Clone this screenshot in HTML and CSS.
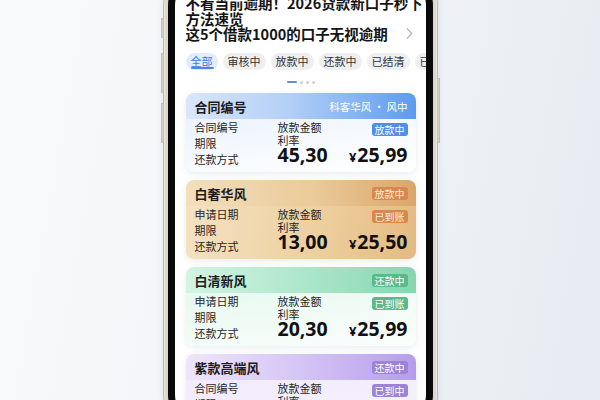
FILE: index.html
```html
<!DOCTYPE html>
<html lang="zh-CN">
<head>
<meta charset="utf-8">
<title>贷款口子速览</title>
<link rel="stylesheet" href="styles.css">
</head>
<body>
<div class="stage">
  <div class="phone">
    <span class="btn btn-l1"></span>
    <span class="btn btn-l2"></span>
    <span class="btn btn-l3"></span>
    <span class="btn btn-r1"></span>
    <div class="bezel">
      <div class="screen">
        <div class="title">
          <div class="tline">不看当前逾期！2026贷款新口子秒下</div>
          <div class="tline">方法速览</div>
          <div class="tline tlast"><span>这5个借款1000的口子无视逾期</span><svg class="chev" width="7" height="11" viewBox="0 0 7 11"><path d="M1.2 0.8 L5.8 5.5 L1.2 10.2" fill="none" stroke="#b8b8b8" stroke-width="1.3" stroke-linecap="round" stroke-linejoin="round"/></svg></div>
        </div>
        <div class="tabs">
          <span class="tab active">全部</span>
          <span class="tab">审核中</span>
          <span class="tab">放款中</span>
          <span class="tab">还款中</span>
          <span class="tab">已结清</span>
          <span class="tab">已逾期</span>
        </div>
        <div class="dots"><span class="dash"></span><span class="dot"></span><span class="dot"></span><span class="dot"></span></div>
        <div class="cards">
          <div class="card c-blue">
            <div class="card-h"><span class="card-t">合同编号</span><span class="card-sub">科客华风 · 风中</span></div>
            <div class="card-b">
              <div class="col-l"><div>合同编号</div><div>期限</div><div>还款方式</div></div>
              <div class="col-m"><div>放款金额</div><div>利率</div><div class="num">45,30</div></div>
              <div class="col-r"><span class="badge">放款中</span><div class="price"><span class="yen">¥</span>25,99</div></div>
            </div>
          </div>
          <div class="card c-gold">
            <div class="card-h"><span class="card-t">白奢华风</span><span class="badge">放款中</span></div>
            <div class="card-b">
              <div class="col-l"><div>申请日期</div><div>期限</div><div>还款方式</div></div>
              <div class="col-m"><div>放款金额</div><div>利率</div><div class="num">13,00</div></div>
              <div class="col-r"><span class="badge">已到账</span><div class="price"><span class="yen">¥</span>25,50</div></div>
            </div>
          </div>
          <div class="card c-green">
            <div class="card-h"><span class="card-t">白清新风</span><span class="badge">还款中</span></div>
            <div class="card-b">
              <div class="col-l"><div>申请日期</div><div>期限</div><div>还款方式</div></div>
              <div class="col-m"><div>放款金额</div><div>利率</div><div class="num">20,30</div></div>
              <div class="col-r"><span class="badge">已到账</span><div class="price"><span class="yen">¥</span>25,99</div></div>
            </div>
          </div>
          <div class="card c-purple">
            <div class="card-h"><span class="card-t">紫款高端风</span><span class="badge">还款中</span></div>
            <div class="card-b">
              <div class="col-l"><div>合同编号</div><div>期限</div><div>还款方式</div></div>
              <div class="col-m"><div>放款金额</div><div>利率</div><div class="num">18,60</div></div>
              <div class="col-r"><span class="badge">已到中</span><div class="price"><span class="yen">¥</span>25,99</div></div>
            </div>
          </div>
        </div>
      </div>
    </div>
  </div>
</div>
</body>
</html>
```
FILE: styles.css
```css
html, body {
  margin: 0;
  padding: 0;
}
body {
  width: 600px;
  height: 400px;
  overflow: hidden;
  background: linear-gradient(100deg, #f9fafb 0%, #f2f4f7 45%, #e7ebf1 100%);
  font-family: "Noto Sans CJK SC", "Noto Sans", sans-serif;
}
.stage {
  display: flex;
  justify-content: center;
  height: 400px;
}
.phone {
  position: relative;
  flex: none;
  width: 275px;
  height: 480px;
  margin-top: -40px;
  padding: 5px;
  box-sizing: border-box;
  border-radius: 46px;
  background: #dcd8d0;
  box-shadow: inset 1px 0 0 #bdb8ae, inset -1px 0 0 #bdb8ae, inset 2px 0 0 #ece9e3, inset -2px 0 0 #ece9e3, 0 0 6px rgba(120,130,150,0.15);
}
.btn {
  position: absolute;
  width: 3px;
  background: #d3cec5;
  border-radius: 1px;
  box-shadow: inset 0 0 0 0.5px #b7b2a8;
}
.btn-l1 { left: -2px; top: 58px; height: 20px; }
.btn-l2 { left: -2px; top: 93px; height: 40px; }
.btn-l3 { left: -2px; top: 143px; height: 40px; }
.btn-r1 { right: -2px; top: 118px; height: 65px; }
.bezel {
  height: 100%;
  padding: 7px;
  box-sizing: border-box;
  background: #0a0a0a;
  border-radius: 41px;
}
.screen {
  height: 100%;
  box-sizing: border-box;
  padding: 23px 10px 0 11px;
  background: #ffffff;
  border-radius: 34px;
  overflow: hidden;
}
.title {
  font-size: 14.5px;
  line-height: 15.5px;
  font-weight: 700;
  color: #141414;
  white-space: nowrap;
}
.tlast {
  display: flex;
  align-items: center;
}
.chev {
  margin-left: auto;
  margin-right: 3px;
}
.tabs {
  display: flex;
  gap: 5px;
  margin-top: 11px;
  white-space: nowrap;
}
.tab {
  position: relative;
  flex: none;
  height: 17px;
  line-height: 17px;
  padding: 0 5px;
  border-radius: 9px;
  background: #eeeff1;
  font-size: 11px;
  color: #333333;
}
.tab.active {
  background: #e2ecfb;
  color: #3b7de2;
}
.tab.active::after {
  content: "";
  position: absolute;
  left: 5px;
  right: 4px;
  bottom: 1px;
  height: 1.5px;
  border-radius: 1px;
  background: #4a86e4;
}
.dots {
  display: flex;
  justify-content: center;
  align-items: center;
  gap: 3px;
  height: 3px;
  margin-top: 11px;
}
.dash {
  width: 10px;
  height: 2.5px;
  border-radius: 2px;
  background: #5b8fe2;
}
.dot {
  width: 3px;
  height: 3px;
  border-radius: 50%;
  background: #cdd1d8;
}
.cards {
  display: flex;
  flex-direction: column;
  gap: 8px;
  margin-top: 9.5px;
}
.card {
  flex: none;
  height: 79px;
  border-radius: 8px;
  overflow: hidden;
  box-shadow: 0 2px 6px rgba(40, 60, 90, 0.10);
}
.card-h {
  height: 26px;
  display: flex;
  align-items: center;
  justify-content: space-between;
  padding: 0 8px 0 9px;
}
.card-t {
  font-size: 13px;
  font-weight: 700;
  color: #1c1c1c;
}
.card-sub {
  font-size: 10.5px;
  color: #ffffff;
}
.card-b {
  display: flex;
  height: 53px;
  padding: 0 8px 0 9px;
  color: #262626;
}
.col-l {
  width: 83px;
  font-size: 11px;
  line-height: 16px;
}
.col-m {
  flex: 1;
  font-size: 11px;
  line-height: 13px;
  padding-top: 1.5px;
}
.num, .price {
  font-family: "Noto Sans", "Liberation Sans", sans-serif;
  font-size: 19.5px;
  font-weight: 700;
  line-height: 15px;
  color: #111111;
}
.num {
  margin-top: 0;
}
.col-r {
  display: flex;
  flex-direction: column;
  align-items: flex-end;
}
.col-r .badge {
  margin-top: 3.5px;
}
.price {
  margin-top: 11px;
}
.yen {
  font-size: 13px;
  margin-right: 1px;
}
.badge {
  height: 13px;
  line-height: 13px;
  padding: 0 3px;
  border-radius: 3px;
  font-size: 10px;
  color: #ffffff;
}

.c-blue .card-h { background: linear-gradient(90deg, #d9e7fb 0%, #b3cff7 45%, #5d9bef 100%); }
.c-blue .card-b { background: linear-gradient(170deg, #edf3fd 0%, #f8fbff 60%, #ffffff 100%); }
.c-blue .badge { background: #4e8ee7; }

.c-gold .card-h { background: linear-gradient(90deg, #f2dfbc 0%, #eacb9a 55%, #daa66a 100%); }
.c-gold .card-b { background: linear-gradient(100deg, #f4e2c2 0%, #eed0a0 55%, #e4ba80 100%); }
.c-gold .badge { background: #d8884b; color: #fdebdc; }

.c-green .card-h { background: linear-gradient(90deg, #d2f4e3 0%, #aee7cb 50%, #86d6b0 100%); }
.c-green .card-b { background: linear-gradient(170deg, #e7f9f0 0%, #f3fcf8 60%, #fbfefc 100%); }
.c-green .badge { background: #5bb98a; }

.c-purple .card-h { background: linear-gradient(90deg, #eee5fb 0%, #d5c5f5 50%, #b59dec 100%); }
.c-purple .card-b { background: linear-gradient(170deg, #f1ebfd 0%, #f7f3fe 100%); }
.c-purple .badge { background: #9b84d8; }
```
